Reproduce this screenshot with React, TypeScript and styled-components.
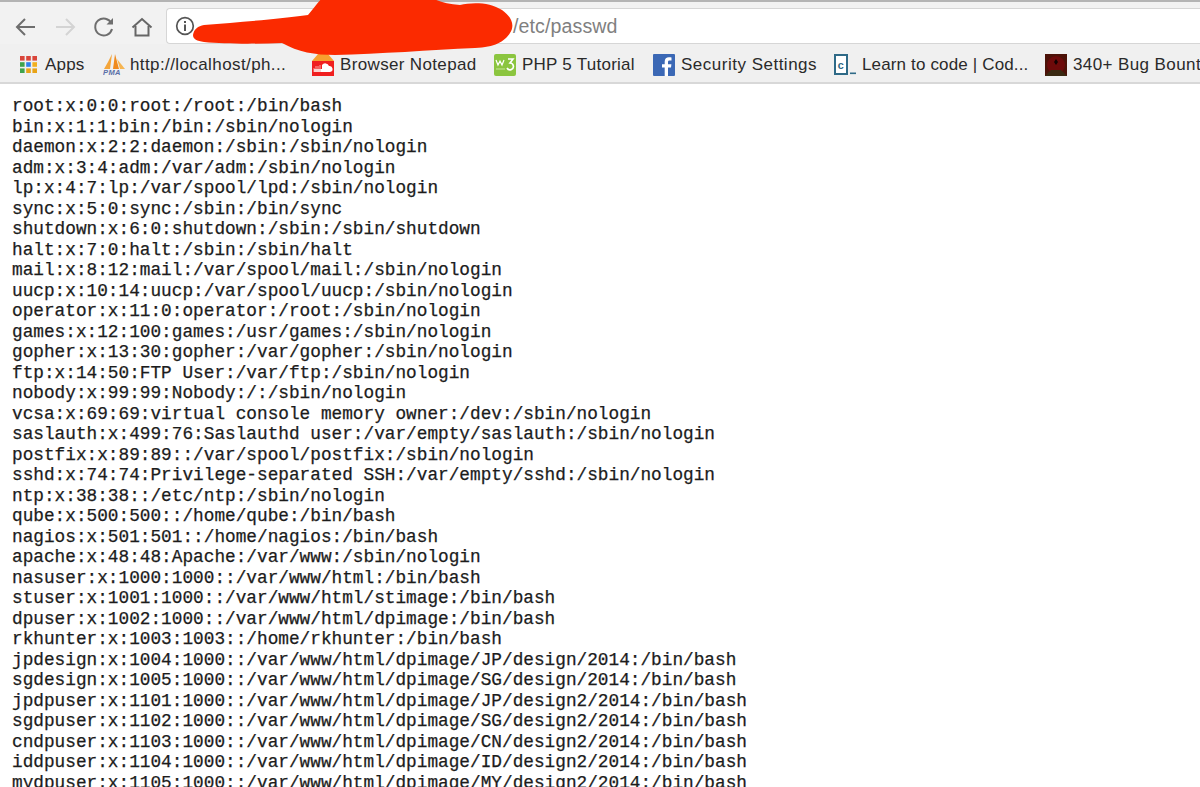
import React from "react";
import styled, { createGlobalStyle } from "styled-components";

const Global = createGlobalStyle`
  html, body { margin: 0; padding: 0; background: #fff; overflow: hidden; height: 787px; }
`;

const Page = styled.div`
  width: 1200px;
  height: 787px;
  overflow: hidden;
  position: relative;
  font-family: "Liberation Sans", Arial, sans-serif;
`;

const TabEdge = styled.div`
  height: 2px;
  background: #b4b4b4;
`;

const Toolbar = styled.div`
  height: 42px;
  box-sizing: border-box;
  background: #f2f2f2;
  display: flex;
  align-items: center;
  padding: 2px 0 0 14px;
`;

const NavButton = styled.button<{ $width: number }>`
  width: ${(p) => p.$width}px;
  height: 24px;
  margin-top: 5px;
  padding: 0;
  border: 0;
  background: none;
  display: flex;
  align-items: center;
  flex: none;
`;

const Address = styled.div`
  flex: 1;
  height: 36px;
  box-sizing: border-box;
  margin: 4px 0 0 4px;
  background: #fff;
  border: 1px solid #d6d6d6;
  border-right: 0;
  border-radius: 4px 0 0 4px;
  display: flex;
  align-items: center;
  padding-left: 8px;
`;

const UrlText = styled.span`
  margin-left: 318px;
  font-size: 19.6px;
  color: #808080;
  letter-spacing: 0.1px;
`;

const Bookmarks = styled.div`
  height: 40px;
  box-sizing: border-box;
  background: #f0f0f0;
  border-bottom: 2px solid #d8d8d8;
  display: flex;
  align-items: center;
  padding: 3px 0 0 19px;
  white-space: nowrap;
  overflow: hidden;
`;

const Bookmark = styled.div<{ $width: number; $gap?: number; $spacing?: number }>`
  width: ${(p) => p.$width}px;
  flex: none;
  display: flex;
  align-items: center;
  gap: ${(p) => p.$gap ?? 6}px;
  font-size: 17px;
  color: #2a2a2a;
  letter-spacing: ${(p) => p.$spacing ?? 0.4}px;

  svg {
    flex: none;
  }
`;

const FileText = styled.pre`
  margin: 0;
  padding: 12px 0 0 12px;
  font-family: "Liberation Mono", "Courier New", monospace;
  font-size: 17.75px;
  line-height: 20.5px;
  color: #1c1c1c;
  -webkit-text-stroke: 0.25px #1c1c1c;
`;

const Scribble = styled.svg`
  position: absolute;
  left: 190px;
  top: 0;
  pointer-events: none;
`;

const Dots = () => (
  <svg width="20" height="20" viewBox="0 0 20 20">
    {[["#d9453a", "#d9453a", "#d9453a"], ["#3fa34d", "#2f80ed", "#f2b01e"], ["#3fa34d", "#e8a317", "#e8a317"]].map((row, y) =>
      row.map((c, x) => <rect key={`${x}${y}`} x={1 + x * 6.2} y={1 + y * 6.2} width="4.6" height="4.6" fill={c} />)
    )}
  </svg>
);

const Pma = () => (
  <svg width="22" height="22" viewBox="0 0 22 22">
    <path d="M9 0 L5 8 L1 15 L7 15 Z" fill="#f4a53a" />
    <path d="M12 0 L10 15 L16 15 Z" fill="#f08a1d" />
    <path d="M14 5 L22 15 L17 15 Z" fill="#f6b552" />
    <text x="0" y="21" fontSize="7.5" fontWeight="700" fontStyle="italic" fill="#5b6fa8" fontFamily="Liberation Sans">PMA</text>
  </svg>
);

const Cloud = () => (
  <svg width="22" height="22" viewBox="0 0 22 22">
    <path d="M0 7 H22 V22 H0 Z" fill="#f01f1f" />
    <path d="M0 7 L6 0 H16 L22 7 Z" fill="#f7a030" />
    <path d="M2 15 h8 v-4 a4 4 0 0 1 7 1 a3 3 0 0 1 1 6 h-9 h-7 Z" fill="#fff" />
    <path d="M2 14 v4 M4 12 v6 M6 12 v6 M8 11 v7" stroke="#f9a7a0" strokeWidth="1" />
  </svg>
);

const W3 = () => (
  <svg width="22" height="22" viewBox="0 0 22 22">
    <rect width="22" height="22" rx="2" fill="#8bc53f" />
    <path d="M2 6 l2 5 l2 -4 l2 4 l2 -5" fill="none" stroke="#fff" strokeWidth="1.2" />
    <path d="M14 5 h5 l-3 4 a3.4 3.4 0 1 1 -3 5" fill="none" stroke="#fff" strokeWidth="1.6" />
    <path d="M2 15 h9" stroke="#c8e69c" strokeWidth="1" />
  </svg>
);

const Facebook = () => (
  <svg width="22" height="22" viewBox="0 0 22 22">
    <rect width="22" height="22" rx="1" fill="#3b68b5" />
    <path d="M15 22 V13.5 H18 L18.4 10.2 H15 V8 C15 7 15.4 6.4 16.6 6.4 H18.5 V3.4 C18 3.3 17 3.2 15.9 3.2 C13.4 3.2 11.7 4.7 11.7 7.5 V10.2 H9 V13.5 H11.7 V22 Z" fill="#fff" />
  </svg>
);

const Codecademy = () => (
  <svg width="22" height="22" viewBox="0 0 22 22">
    <rect x="1" y="1" width="12" height="19" fill="#fff" stroke="#2f6a87" strokeWidth="2" />
    <text x="3.4" y="15" fontSize="11" fontWeight="700" fill="#2f6a87" fontFamily="Liberation Mono">c</text>
    <rect x="16" y="18.5" width="6" height="1.6" fill="#2f6a87" />
  </svg>
);

const Bug = () => (
  <svg width="22" height="22" viewBox="0 0 22 22">
    <rect width="22" height="22" fill="#4c1208" />
    <circle cx="11" cy="11" r="9" fill="#6d0a0a" />
    <path d="M0 22 L6 16 L16 16 L22 22 Z" fill="#3a2a12" />
    <path d="M11 5 l2 3 l-2 3 l-2 -3 Z" fill="#120303" />
  </svg>
);

const lines = `root:x:0:0:root:/root:/bin/bash
bin:x:1:1:bin:/bin:/sbin/nologin
daemon:x:2:2:daemon:/sbin:/sbin/nologin
adm:x:3:4:adm:/var/adm:/sbin/nologin
lp:x:4:7:lp:/var/spool/lpd:/sbin/nologin
sync:x:5:0:sync:/sbin:/bin/sync
shutdown:x:6:0:shutdown:/sbin:/sbin/shutdown
halt:x:7:0:halt:/sbin:/sbin/halt
mail:x:8:12:mail:/var/spool/mail:/sbin/nologin
uucp:x:10:14:uucp:/var/spool/uucp:/sbin/nologin
operator:x:11:0:operator:/root:/sbin/nologin
games:x:12:100:games:/usr/games:/sbin/nologin
gopher:x:13:30:gopher:/var/gopher:/sbin/nologin
ftp:x:14:50:FTP User:/var/ftp:/sbin/nologin
nobody:x:99:99:Nobody:/:/sbin/nologin
vcsa:x:69:69:virtual console memory owner:/dev:/sbin/nologin
saslauth:x:499:76:Saslauthd user:/var/empty/saslauth:/sbin/nologin
postfix:x:89:89::/var/spool/postfix:/sbin/nologin
sshd:x:74:74:Privilege-separated SSH:/var/empty/sshd:/sbin/nologin
ntp:x:38:38::/etc/ntp:/sbin/nologin
qube:x:500:500::/home/qube:/bin/bash
nagios:x:501:501::/home/nagios:/bin/bash
apache:x:48:48:Apache:/var/www:/sbin/nologin
nasuser:x:1000:1000::/var/www/html:/bin/bash
stuser:x:1001:1000::/var/www/html/stimage:/bin/bash
dpuser:x:1002:1000::/var/www/html/dpimage:/bin/bash
rkhunter:x:1003:1003::/home/rkhunter:/bin/bash
jpdesign:x:1004:1000::/var/www/html/dpimage/JP/design/2014:/bin/bash
sgdesign:x:1005:1000::/var/www/html/dpimage/SG/design/2014:/bin/bash
jpdpuser:x:1101:1000::/var/www/html/dpimage/JP/design2/2014:/bin/bash
sgdpuser:x:1102:1000::/var/www/html/dpimage/SG/design2/2014:/bin/bash
cndpuser:x:1103:1000::/var/www/html/dpimage/CN/design2/2014:/bin/bash
iddpuser:x:1104:1000::/var/www/html/dpimage/ID/design2/2014:/bin/bash
mydpuser:x:1105:1000::/var/www/html/dpimage/MY/design2/2014:/bin/bash`;

export default function App() {
  return (
    <Page>
      <Global />
      <TabEdge />
      <Toolbar>
        <NavButton $width={39}>
          <svg width="24" height="24" viewBox="0 0 24 24" fill="none" stroke="#6e6e6e" strokeWidth="2"><path d="M21 12 H3 M11 4 L3 12 L11 20" /></svg>
        </NavButton>
        <NavButton $width={39}>
          <svg width="24" height="24" viewBox="0 0 24 24" fill="none" stroke="#d4d4d4" strokeWidth="2"><path d="M3 12 H21 M13 4 L21 12 L13 20" /></svg>
        </NavButton>
        <NavButton $width={39}>
          <svg width="24" height="24" viewBox="0 0 24 24" fill="none" stroke="#6e6e6e" strokeWidth="2"><path d="M19.5 8.5 A8.5 8.5 0 1 0 20 14" /><path d="M21 3 V9.5 H14.5 Z" fill="#6e6e6e" stroke="none" /></svg>
        </NavButton>
        <NavButton $width={31}>
          <svg width="22" height="22" viewBox="0 0 22 22" fill="none" stroke="#666" strokeWidth="2"><path d="M1.5 11.5 L11 3 L20.5 11.5" /><path d="M4.5 10 V19.5 H17.5 V10" /></svg>
        </NavButton>
        <Address>
          <svg width="20" height="20" viewBox="0 0 20 20" fill="none" stroke="#555" strokeWidth="1.7"><circle cx="10" cy="10" r="8.3" /><path d="M10 8.5 V15" strokeWidth="2" /><path d="M10 5 V7" strokeWidth="2" /></svg>
          <UrlText>/etc/passwd</UrlText>
        </Address>
      </Toolbar>
      <Bookmarks>
        <Bookmark $width={84} $gap={6} $spacing={0.2}><Dots />Apps</Bookmark>
        <Bookmark $width={209} $gap={5}><Pma />http://localhost/ph...</Bookmark>
        <Bookmark $width={182} $gap={6} $spacing={0.35}><Cloud />Browser Notepad</Bookmark>
        <Bookmark $width={159} $gap={6} $spacing={0.25}><W3 />PHP 5 Tutorial</Bookmark>
        <Bookmark $width={181} $gap={6} $spacing={0.5}><Facebook />Security Settings</Bookmark>
        <Bookmark $width={211} $gap={6} $spacing={0.15}><Codecademy />Learn to code | Cod...</Bookmark>
        <Bookmark $width={180} $gap={6} $spacing={0.4}><Bug />340+ Bug Bounty</Bookmark>
      </Bookmarks>
      <FileText>{lines}</FileText>
      <Scribble width="330" height="60" viewBox="0 0 330 60">
        <path d="M3 35 C4 29 8 26 14 25 C50 22 90 19 118 15 C124 8 128 2 134 -4 L238 -4 C245 0 255 4 270 5 C282 2 300 2 312 10 C322 17 325 26 320 33 C314 42 305 47 285 48 C240 50 190 54 145 55 C125 55 108 52 92 43 C65 44 35 44 14 42 C7 41 3 39 3 35 Z" fill="#fb2a00" />
      </Scribble>
    </Page>
  );
}
